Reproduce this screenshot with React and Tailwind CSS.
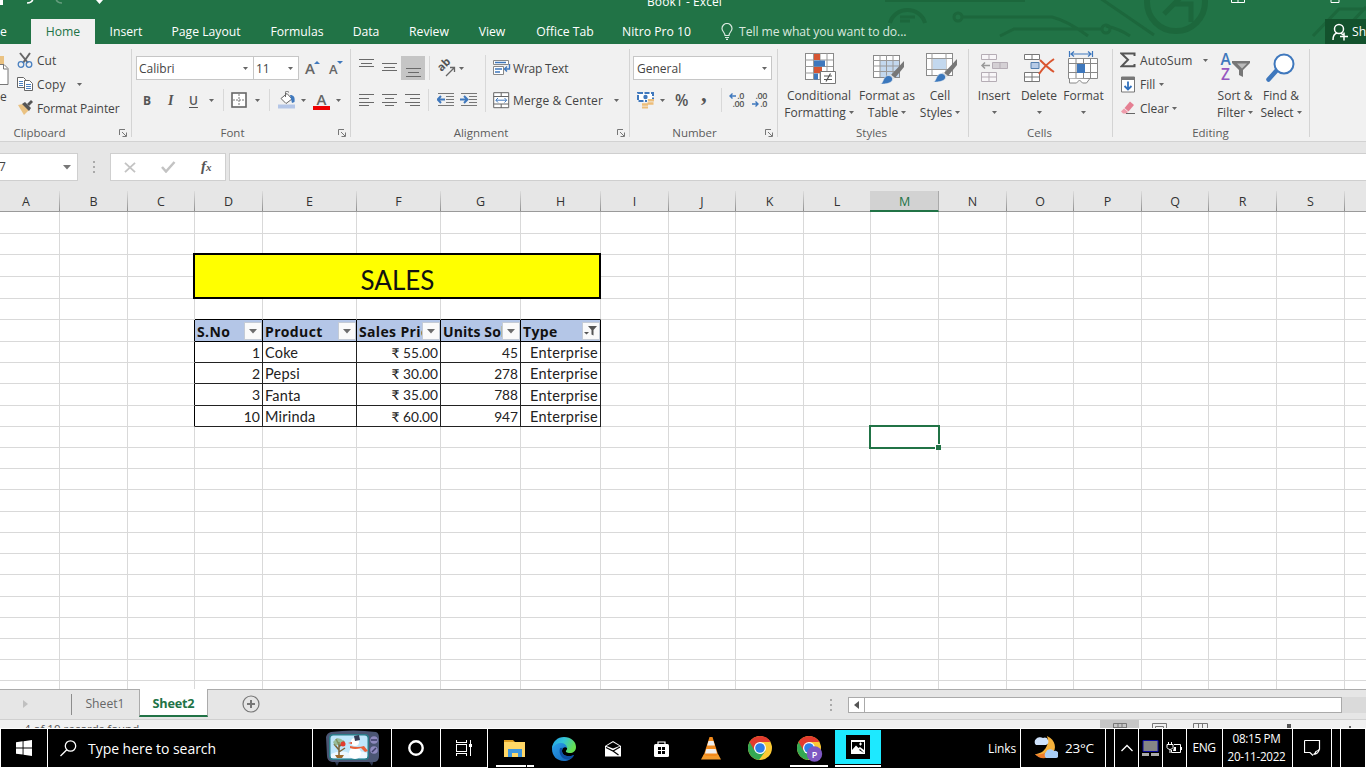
import React from "react";

const UI = "font-['Open_Sans','Noto_Sans',sans-serif]";

function Caret({ className = "" }) {
  return (
    <svg className={"shrink-0 " + className} width="5" height="3" viewBox="0 0 5 3">
      <path d="M0 0h5L2.5 3z" fill="#666" />
    </svg>
  );
}

function Sep({ className = "" }) {
  return <div className={"w-px shrink-0 bg-[#d8d8d8] " + className} />;
}

function Launcher({ className = "" }) {
  return (
    <svg className={"absolute " + className} width="9" height="9" viewBox="0 0 9 9" fill="none" stroke="#777">
      <path d="M.5 6V.5H6M3 3l4 4M7.500 3.500v4h-4" />
    </svg>
  );
}

function Group({ width, label, shift = "", launcher, children }) {
  return (
    <section className={"relative flex shrink-0 flex-col " + width}>
      <div className="h-[79px]">{children}</div>
      <div className={"flex h-[19px] items-center justify-center pt-[2px] text-[11.5px] text-[#5c5c5c] " + shift}>{label}</div>
      {launcher && <Launcher className="bottom-[3px] right-[4px]" />}
      <div className="absolute right-0 top-[5px] h-[88px] w-px bg-[#d4d4d4]" />
    </section>
  );
}

function Lines({ rows, className = "", h = 14 }) {
  return (
    <svg className={"shrink-0 " + className} width="15" height={h} viewBox={"0 0 15 " + h} stroke="#6a6a6a">
      {rows.map(([x, w, y], i) => (
        <path key={i} d={`M${x} ${y}.5h${w}`} />
      ))}
    </svg>
  );
}

function Big({ icon, l1, l2, width, caretOnly }) {
  return (
    <div className={"flex shrink-0 flex-col items-center " + width}>
      <div className="flex h-[41px] items-end">{icon}</div>
      <div className="mt-[2px] flex h-[17px] items-center whitespace-nowrap">{l1}</div>
      <div className="flex h-[17px] items-center gap-[3px] whitespace-nowrap">
        {caretOnly ? <Caret /> : <>{l2}<Caret /></>}
      </div>
    </div>
  );
}

function GridIcon({ w = 28, h = 28, children }) {
  return (
    <>
      <rect x=".5" y=".5" width={w} height={h} fill="#fff" stroke="#8a8a8a" />
      {children}
    </>
  );
}

function Brush({ x, y }) {
  return (
    <g transform={`translate(${x} ${y})`}>
      <path d="M24-2v6L15 15l-4-3z" fill="#777" />
      <path d="M10 11l5 4-2 1-5-3z" fill="#ddd" />
      <path d="M8 12.500c3 0 5 2 4.500 4.500-1 3-7 4.500-12 4 3-1 2.500-7.500 7.500-8.500z" fill="#3b78bd" stroke="#f1f1f1" strokeWidth=".6" />
    </g>
  );
}

function ClipboardGroup() {
  return (
    <Group width="w-[132px]" label="Clipboard" shift="pr-[53px]" launcher>
      <div className="flex pt-[4px]">
        <div className="w-[17px] shrink-0 overflow-hidden">
          <svg width="10" height="38" viewBox="0 0 10 38" className="block">
            <path d="M0 8h4v8H0z" fill="#eac282" />
            <path d="M-3 16.500h7l4 4V36.500H-3z" fill="#fff" stroke="#777" />
            <path d="M3.500 17v4h4" fill="none" stroke="#777" />
          </svg>
          <div className="mt-[2px] leading-[17px]">e</div>
        </div>
        <div className="flex flex-col">
          <div className="flex h-[24px] items-center">
            <svg width="17" height="17" viewBox="0 0 17 17" fill="none">
              <path d="M3 1l8 10M13 1L6 11" stroke="#666" strokeWidth="2" />
              <circle cx="4" cy="12.500" r="2.800" stroke="#4a80c0" strokeWidth="1.300" />
              <circle cx="12" cy="12.500" r="2.800" stroke="#4a80c0" strokeWidth="1.300" />
            </svg>
            <span className="ml-[3px]">Cut</span>
          </div>
          <div className="flex h-[24px] items-center">
            <svg width="17" height="16" viewBox="0 0 17 16" fill="#fff" stroke="#666">
              <path d="M.5 1.500h6l2 2v8h-8z" />
              <path d="M2 5.500h4M2 7.500h4M2 9.500h4" stroke="#4a80c0" />
              <path d="M7.500 4.500h5l3 3v7h-8z" />
              <path d="M9 8.500h5M9 10.500h5M9 12.500h5" stroke="#4a80c0" />
            </svg>
            <span className="ml-[3px] tracking-[.15px]">Copy</span>
            <Caret className="ml-[11px]" />
          </div>
          <div className="flex h-[24px] items-center">
            <svg width="17" height="16" viewBox="0 0 17 16">
              <path d="M1 5l5-1 6 6-5 5z" fill="#eac282" />
              <path d="M5 4l3-2 6 6-2 3z" fill="#555" />
              <path d="M10 4l4-4 2 2-4 4z" fill="#555" />
            </svg>
            <span className="ml-[3px] whitespace-nowrap tracking-[-.08px]">Format Painter</span>
          </div>
        </div>
      </div>
    </Group>
  );
}

function FontGroup() {
  return (
    <Group width="w-[219px]" label="Font" shift="pr-[18px]" launcher>
      <div className="flex pl-[4px] pt-[12px]">
        <div className="flex h-[24px] w-[118px] items-center justify-between border border-[#c6c6c6] bg-white pl-[2px] pr-[5px]">
          Calibri <Caret />
        </div>
        <div className="-ml-px flex h-[24px] w-[46px] items-center justify-between border border-[#c6c6c6] bg-white pl-[2px] pr-[5px]">
          11 <Caret />
        </div>
        <div className="ml-[6px] flex w-[24px] items-center">
          <span className="text-[15px] font-semibold leading-none text-[#666]">A</span>
          <svg className="mb-[12px] ml-[-1px]" width="6" height="3"><path d="M0 3h6L3 0z" fill="#3f78bd" /></svg>
        </div>
        <div className="flex items-center">
          <span className="pt-[3px] text-[13px] font-semibold leading-none text-[#666]">A</span>
          <svg className="mb-[12px] ml-[-1px]" width="6" height="3"><path d="M0 0h6L3 3z" fill="#3f78bd" /></svg>
        </div>
      </div>
      <div className="mt-[8px] flex h-[24px] items-center">
        <span className="ml-[11px] w-[24px] font-bold text-[#555]">B</span>
        <span className="w-[22px] pl-[1px] font-['Liberation_Serif',serif] text-[14px] font-bold italic text-[#555]">I</span>
        <span className="w-[20px] font-semibold text-[#555] underline underline-offset-2">U</span>
        <Caret className="mr-[9px]" />
        <Sep className="h-[22px]" />
        <svg className="ml-[7px]" width="16" height="16" viewBox="0 0 16 16" fill="none">
          <rect x="1" y="1" width="14" height="14" fill="#fff" stroke="#666" strokeWidth="1.600" />
          <path d="M8 2v12M2 8h12" stroke="#777" strokeDasharray="2 1" />
        </svg>
        <Caret className="ml-[8px] mr-[9px]" />
        <Sep className="h-[22px]" />
        <svg className="ml-[8px]" width="18" height="18" viewBox="0 0 18 18">
          <path d="M0 13.500h17v4H0z" fill="#b4c6e7" />
          <path d="M3 7.500l6-5 5 5.500-6 4.500z" fill="#fff" stroke="#666" />
          <path d="M7.500 6V1.500a1.500 1.500 0 013 0" fill="none" stroke="#666" />
          <path d="M12 4c4 0 5 2 4.500 7l-2.500 1z" fill="#3f78bd" />
        </svg>
        <Caret className="ml-[5px]" />
        <span className="ml-[7px] flex w-[17px] flex-col items-center pt-[2px]">
          <span className="text-[15px] font-semibold leading-[12px] text-[#666]">A</span>
          <span className="mt-px h-[4px] w-full bg-[#ee0000]" />
        </span>
        <Caret className="ml-[6px]" />
      </div>
    </Group>
  );
}

function Indent({ flip }) {
  return (
    <svg width="18" height="16" viewBox="0 0 18 16" fill="none" className="shrink-0">
      <path d="M1 1.500h16M9 4.500h8M9 7.500h8M9 10.500h8M1 13.500h16" stroke="#777" />
      <path d={flip ? "M0 7.500h7M4 4l3.500 3.500L4 11" : "M8 7.500H1M4 4L.7 7.500 4 11"} stroke="#3f78bd" strokeWidth="2" />
    </svg>
  );
}

function AlignmentGroup() {
  return (
    <Group width="w-[279px]" label="Alignment" shift="pr-[19px]" launcher>
      <div className="flex">
        <div className="w-[134px] pt-[12px]">
          <div className="flex h-[24px]">
            <Lines className="ml-[8px]" rows={[[0, 15, 3], [2, 11, 7], [0, 15, 10]]} />
            <Lines className="ml-[8px] mt-[4px]" rows={[[0, 15, 3], [2, 11, 7], [0, 15, 10]]} />
            <div className="ml-[4px] flex h-[24px] w-[24px] justify-center bg-[#c5c5c5] pt-[11px]">
              <Lines rows={[[0, 15, 1], [2, 11, 5], [0, 15, 9]]} />
            </div>
            <Sep className="ml-[4px] h-[24px]" />
            <svg className="ml-[7px] mt-[2px] overflow-visible" width="19" height="19" viewBox="0 0 19 19">
              <text transform="translate(4.500 14) rotate(-45)" fontSize="11" fontWeight="700" fill="#555">ab</text>
              <path d="M9 18L17 10M13 9.500h4.500V14" fill="none" stroke="#666" strokeWidth="1.300" />
            </svg>
            <Caret className="ml-[3px] mt-[11px]" />
          </div>
          <div className="mt-[8px] flex h-[24px] items-center">
            <Lines className="ml-[8px]" rows={[[0, 15, 1], [0, 10, 5], [0, 15, 9], [0, 10, 12]]} />
            <Lines className="ml-[8px]" rows={[[0, 15, 1], [3, 9, 5], [0, 15, 9], [3, 9, 12]]} />
            <Lines className="ml-[8px]" rows={[[0, 15, 1], [5, 10, 5], [0, 15, 9], [5, 10, 12]]} />
            <Sep className="ml-[8px] mr-[8px] h-[22px]" />
            <Indent />
            <span className="w-[5px]" />
            <Indent flip />
          </div>
        </div>
        <Sep className="mt-[11px] h-[57px]" />
        <div className="pl-[7px] pt-[12px]">
          <div className="flex h-[24px] items-center">
            <svg width="18" height="18" viewBox="0 0 18 18" fill="none">
              <path d="M.5 1.500h15v4H.5z" fill="#fff" stroke="#888" />
              <path d="M2 3.500h11" stroke="#3f78bd" strokeWidth="1.500" />
              <path d="M.5 7.500h10v8H.5z" fill="#fff" stroke="#888" />
              <path d="M2 10h7M2 13h5" stroke="#3f78bd" strokeWidth="1.500" />
              <path d="M16.500 5v5h-5M14 7.500L11.500 10l2.500 2.500" stroke="#3f78bd" strokeWidth="1.400" />
            </svg>
            <span className="ml-[2px] tracking-[-.2px]">Wrap Text</span>
          </div>
          <div className="mt-[8px] flex h-[24px] items-center">
            <svg width="18" height="17" viewBox="0 0 18 17" fill="none">
              <path d="M.7.700h15v15H.7zM.7 4.500h15M.7 12h15M8.200.700v4M8.200 12v4" fill="#fff" stroke="#666" />
              <path d="M3 8.200h10.500M5 6L2.800 8.200 5 10.500M11.500 6l2.200 2.200-2.200 2.300" stroke="#3f78bd" />
            </svg>
            <span className="ml-[2px] whitespace-nowrap pt-px tracking-[.12px]">Merge &amp; Center</span>
            <Caret className="ml-[11px]" />
          </div>
        </div>
      </div>
    </Group>
  );
}

function Decimal({ top, bottom, left }) {
  return (
    <div className="relative w-[23px] shrink-0 text-[9px] font-semibold leading-[8px] tracking-[-.4px] text-[#555]">
      <div className="w-[15px] text-right">{top}</div>
      <div className="w-[15px] text-right">{bottom}</div>
      <svg className={"absolute left-0 " + (left ? "top-[1px]" : "top-[9px]")} width="7" height="6" viewBox="0 0 7 6" fill="none" stroke="#3f78bd" strokeWidth="1.400">
        <path d={left ? "M7 3H1M3.500.500L1 3l2.500 2.500" : "M0 3h6M3.500.500L6 3 3.500 5.500"} />
      </svg>
    </div>
  );
}

function NumberGroup() {
  return (
    <Group width="w-[148px]" label="Number" shift="pr-[19px]" launcher>
      <div className="pl-[3px] pt-[12px]">
        <div className="flex h-[24px] w-[139px] items-center justify-between border border-[#c6c6c6] bg-white pl-[3px] pr-[4px]">
          General <Caret />
        </div>
        <div className="mt-[8px] flex h-[24px] items-center pl-[4px]">
          <svg width="18" height="18" viewBox="0 0 18 18">
            <path d="M1 2h15v8H1z" fill="#fff" stroke="#3f78bd" strokeWidth="2" strokeDasharray="5 1.500" />
            <circle cx="8.500" cy="6" r="2.200" fill="#3f78bd" />
            <path d="M10 8h7v8h-6v1H4v-5h6z" fill="#f1f1f1" />
            <path d="M11 8h6v2.500h-6zM10.500 11.300h6v2.500h-6zM5 12.300h6v2.400H5zM5 15.400h6v2H5z" fill="#edbd78" />
          </svg>
          <Caret className="ml-[5px]" />
          <span className="ml-[10px] w-[25px] text-[15.500px] font-semibold text-[#555]">%</span>
          <span className="mt-[-12px] w-[21px] pl-px font-['Liberation_Serif',serif] text-[23px] font-bold leading-[12px] text-[#555]">,</span>
          <Sep className="mr-[7px] h-[24px]" />
          <Decimal top=".0" bottom=".00" left />
          <Decimal top=".00" bottom=".0" />
        </div>
      </div>
    </Group>
  );
}

function StylesGroup() {
  return (
    <Group width="w-[191px]" label="Styles" shift="pr-[4px]">
      <div className="flex">
        <Big
          width="w-[82px]"
          l1="Conditional"
          l2="Formatting"
          icon={
            <svg className="ml-[3px]" width="32" height="32" viewBox="0 0 32 32">
              <GridIcon w={28} h={26}>
                <path d="M8.500 0v27M15 0v27M22 0v27M0 7h28M0 13.500h28M0 20h28" stroke="#999" />
                <path d="M9 1h6v6H9zM9 14h8v6H9z" fill="#d65532" />
                <path d="M9 7.500h11v6H9zM9 20.500h4v6H9z" fill="#3f78bd" />
              </GridIcon>
              <path d="M15.500 18.500h15v12h-15z" fill="#fff" stroke="#777" />
              <path d="M19 23h8M19 26.500h8M25.500 20.500l-4.500 8" stroke="#555" strokeWidth="1.200" />
            </svg>
          }
        />
        <Big
          width="w-[54px]"
          l1="Format as"
          l2="Table"
          icon={
            <svg className="ml-[4px]" width="32" height="32" viewBox="0 0 32 32">
              <g transform="translate(0 2)">
                <GridIcon w={26} h={22}>
                  <path d="M7 6h19v16H7z" fill="#c3d8ee" />
                  <path d="M7 0v22M13.500 0v22M20 0v22M0 5.500h26M0 11h26M0 16.500h26" stroke="#999" />
                </GridIcon>
              </g>
              <Brush x={7} y={10} />
            </svg>
          }
        />
        <Big
          width="w-[52px]"
          l1="Cell"
          l2="Styles"
          icon={
            <svg className="ml-[4px]" width="32" height="32" viewBox="0 0 32 32">
              <GridIcon w={26} h={22}>
                <path d="M6 0v22M20 0v22M0 5.500h26M0 16.500h26" stroke="#999" />
                <path d="M7 6h13v10H7z" fill="#c3d8ee" />
              </GridIcon>
              <Brush x={7} y={8} />
            </svg>
          }
        />
      </div>
    </Group>
  );
}

function CellsGroup() {
  return (
    <Group width="w-[144px]" label="Cells" shift="pr-[3px]">
      <div className="flex">
        <Big
          width="ml-[2px] w-[46px]"
          l1="Insert"
          caretOnly
          icon={
            <svg width="29" height="32" viewBox="0 0 29 32" fill="#f8f6f8" stroke="#b5adb5">
              <path d="M1.500 1.500h15v5h-15zM9 1.500v5M1.500 19.500h15v9h-15zM9 19.500v9M1.500 24h15" />
              <path d="M12.500 9.500h15v6h-15zM20 9.500v6" fill="#d4d0d4" />
              <path d="M10 12.500H2M5 9.500l-3 3 3 3" fill="none" stroke="#999" strokeWidth="1.500" />
            </svg>
          }
        />
        <Big
          width="w-[44px]"
          l1="Delete"
          caretOnly
          icon={
            <svg width="32" height="32" viewBox="0 0 32 32" fill="#fff" stroke="#777">
              <path d="M1.500 1.500h15v5h-15zM9 1.500v5M1.500 19.500h15v9h-15zM9 19.500v9M1.500 24h15" />
              <path d="M8 9.500h8v6H8z" fill="#b7cbe6" stroke="#557fae" />
              <path d="M17 7c4 4 8 8 14 12M31 6C25 10 20 15 16 21" fill="none" stroke="#da5630" strokeWidth="2" />
            </svg>
          }
        />
        <Big
          width="w-[45px]"
          l1="Format"
          caretOnly
          icon={
            <svg width="31" height="34" viewBox="0 0 31 34" fill="#fff" stroke="#888">
              <path d="M.5 7.500h29v20h-29zM8 7.500v20M15.500 7.500v20M22.500 7.500v20M.5 12.500h29M.5 21.500h29" />
              <path d="M9 13h8v9H9z" fill="#3f78bd" stroke="none" />
              <path d="M1.500 27.500v4.500h7l3-3 3 3h4l3-4" />
              <path d="M1.500 0v6M24.500 0v6M3 3h20M6 .500L3 3l3 2.500M20 .500L23 3l-3 2.500" fill="none" stroke="#3f78bd" strokeWidth="1.200" />
            </svg>
          }
        />
      </div>
    </Group>
  );
}

function EditingGroup() {
  return (
    <Group width="w-[197px]" label="Editing" shift="pr-[2px]">
      <div className="flex">
        <div className="w-[99px] shrink-0 pl-[7px] pt-[4px]">
          <div className="flex h-[24px] items-center">
            <svg width="16" height="16" viewBox="0 0 16 16" fill="none" stroke="#555" strokeWidth="2">
              <path d="M14.500 4V1.500H1.500L8 7.800 1.500 14.300h13V12" />
            </svg>
            <span className="ml-[4px] tracking-[.15px]">AutoSum</span>
            <Caret className="ml-[10px]" />
          </div>
          <div className="flex h-[24px] items-center">
            <svg width="16" height="17" viewBox="0 0 16 17" fill="none">
              <path d="M1.500 1h13v15h-13z" fill="#fff" stroke="#777" />
              <path d="M1 1h14v3H1z" fill="#777" />
              <path d="M8 5.500v8M4.500 10L8 13.500l3.500-3.500" stroke="#3070bd" strokeWidth="1.800" />
            </svg>
            <span className="ml-[4px]">Fill</span>
            <Caret className="ml-[4px]" />
          </div>
          <div className="flex h-[24px] items-center">
            <svg width="16" height="16" viewBox="0 0 16 16">
              <path d="M4.500 8L10 1.500l4 3.500-5.500 6.500z" fill="#e57f92" />
              <path d="M4 8.500L8 12l-1.500 1.500H3L1 11.500z" fill="#ef9cab" />
              <path d="M6 13.500h9" stroke="#666" />
            </svg>
            <span className="ml-[4px]">Clear</span>
            <Caret className="ml-[3px]" />
          </div>
        </div>
        <Big
          width="w-[46px]"
          l1="Sort &"
          l2="Filter"
          icon={
            <div className="flex h-[33px] w-[31px]">
              <div className="w-[12px] text-center text-[15.500px] font-semibold leading-[15px]">
                <div className="text-[#3f78bd]">A</div>
                <div className="text-[#9656c0]">Z</div>
              </div>
              <svg width="19" height="26" viewBox="0 0 19 26" className="shrink-0">
                <path d="M0 9h18v2l-7 7v7l-4-2v-5L0 11z" fill="#777" />
                <path d="M5 11.500h10l-5 5z" fill="#bbb" />
              </svg>
            </div>
          }
        />
        <Big
          width="w-[46px]"
          l1="Find &"
          l2="Select"
          icon={
            <svg width="30" height="32" viewBox="0 0 30 32">
              <path d="M11 17L2.500 26.500" stroke="#3f78bd" strokeWidth="4.500" strokeLinecap="round" />
              <circle cx="18" cy="11" r="9.500" fill="#fff" stroke="#3f78bd" strokeWidth="2" />
            </svg>
          }
        />
      </div>
    </Group>
  );
}

const TABS = [
  ["Insert", "w-[62px]"],
  ["Page Layout", "w-[98px]"],
  ["Formulas", "w-[84px]"],
  ["Data", "w-[54px]"],
  ["Review", "w-[72px]"],
  ["View", "w-[54px]"],
  ["Office Tab", "w-[92px]"],
  ["Nitro Pro 10", "w-[91px]"],
];

function Header() {
  return (
    <header className="relative h-[44px] shrink-0 overflow-hidden bg-[#217346] text-white">
      <svg className="absolute left-[880px] top-0" width="486" height="44" viewBox="0 0 486 44" fill="none" stroke="#1c673c" strokeWidth="4">
        <path d="M5 0h140M10 23a18 17 0 0135 0" />
        <path d="M20 17h15M20 21h10" strokeWidth="3" />
        <circle cx="78" cy="17" r="4" strokeWidth="3" />
        <path d="M82 17h90q16 4 36 19M120 36l14-7h88M226 26q14 3 24 10M180-2h40l54 37" strokeWidth="3" />
        <circle cx="226" cy="29" r="4" strokeWidth="3" />
        <circle cx="296" cy="2" r="29" strokeWidth="6" />
        <path d="M284 14l26-26M293 4h18v18" strokeWidth="5" />
        <path d="M433 36l26-27h27M470 24l16-17" strokeWidth="3" />
      </svg>
      <div className="relative flex h-[19px]">
        <svg width="110" height="6" viewBox="0 0 110 6" fill="none">
          <path d="M0 0h3v5H0z" fill="#fff" />
          <path d="M27 3q5 0 6-4" stroke="#fff" strokeWidth="1.500" />
          <path d="M62 3q-5 0-6-4" stroke="#649c7c" strokeWidth="1.500" />
          <path d="M96 0h7l-3.500 4z" fill="#fff" />
        </svg>
        <div className="ml-[537px] mt-[-7px] w-[584px] text-[12px] leading-[17px] tracking-[.08px]">Book1 - Excel</div>
        <svg width="14" height="5" viewBox="0 0 14 5" fill="none" stroke="#fff" className="mt-[-1px]">
          <path d="M.5 0V3.500H13.500V0M7 0v3.500" />
        </svg>
        <svg width="12" height="5" viewBox="0 0 12 5" fill="none" stroke="#fff" className="ml-[85px]">
          <path d="M1 0v2.500h8V0" />
        </svg>
      </div>
      <nav className="relative flex h-[25px] items-stretch text-[12.200px]">
        <div className="flex w-[31px] shrink-0 items-center pt-[2px]">e</div>
        <div className="flex w-[64px] shrink-0 items-center justify-center bg-[#f1f1f1] pt-[2px] text-[#217346]">Home</div>
        {TABS.map(([name, w]) => (
          <div key={name} className={"flex shrink-0 items-center justify-center whitespace-nowrap pt-[2px] " + w}>{name}</div>
        ))}
        <div className="ml-[19px] flex w-[604px] shrink-0 items-center text-[#d9e8df]">
          <svg width="12" height="17" viewBox="0 0 12 17" fill="none" stroke="#d9e8df" strokeWidth="1.200">
            <path d="M4 12.500c0-3-3-4-3-7a5 5 0 0110 0c0 3-3 4-3 7zM4 14.500h4M5 16.300h2" />
          </svg>
          <span className="ml-[6px] pt-[2px] tracking-[-.08px]">Tell me what you want to do...</span>
        </div>
        <div className="flex flex-1 items-center bg-[#13522d] pl-[7px]">
          <svg className="shrink-0" width="16" height="18" viewBox="0 0 16 18" fill="none" stroke="#fff" strokeWidth="1.500">
            <circle cx="7" cy="6" r="4.500" />
            <path d="M1 17q0-6 4-7M9 10l2 2M8 13.500h8M12 9.500v8" />
          </svg>
          <span className="ml-[4px] whitespace-nowrap pt-[2px]">Share</span>
        </div>
      </nav>
    </header>
  );
}

function FormulaBar() {
  return (
    <div className="flex h-[49px] shrink-0 items-start border-t border-[#d2d2d2] bg-[#e6e6e6] pt-[11px] text-[12px] text-[#444]">
      <div className="flex h-[28px] w-[78px] items-center justify-between border border-l-0 border-[#cfcfcf] bg-white pr-[6px]">
        <span className="-ml-px">7</span>
        <svg width="8" height="5"><path d="M0 0h8L4 4.500z" fill="#777" /></svg>
      </div>
      <svg className="ml-[14px] mt-[8px]" width="4" height="12" fill="#aaa"><path d="M1 0h2v2H1zM1 5h2v2H1zM1 10h2v2H1z" /></svg>
      <div className="ml-[14px] flex h-[28px] w-[116px] items-center border border-[#cfcfcf] bg-white">
        <svg className="ml-[13px]" width="12" height="11" viewBox="0 0 13 12" stroke="#c3c3c3" strokeWidth="2"><path d="M1 1l11 10M12 1L1 11" /></svg>
        <svg className="ml-[25px]" width="15" height="12" viewBox="0 0 15 12" fill="none" stroke="#c3c3c3" strokeWidth="2.500"><path d="M1 6l4 4.500L13.500 1" /></svg>
        <span className="ml-[25px] pb-px font-['Liberation_Serif',serif] text-[15px] font-bold italic leading-none text-[#555]">
          f<span className="text-[11px]">x</span>
        </span>
      </div>
      <div className="ml-[3px] h-[28px] flex-1 border border-r-0 border-[#cfcfcf] bg-white" />
    </div>
  );
}

const COLS = "grid-cols-[60px_68px_67px_68px_94px_84px_80px_80px_68px_67px_68px_67px_68px_68px_67px_68px_67px_68px_68px_22px]";
const ROWS = "grid-rows-[22px_21px_22px_22px_21px_22px_21px_21px_22px_21px_21px_21px_21px_22px_21px_21px_21px_22px_21px_21px_21px_21px_21px]";
const LETTERS = "ABCDEFGHIJKLMNOPQRS".split("").concat("");

const HEAD = ["S.No", "Product", "Sales Price", "Units Sold", "Type"];
const DATA = [
  ["1", "Coke", "₹ 55.00", "45", "Enterprise"],
  ["2", "Pepsi", "₹ 30.00", "278", "Enterprise"],
  ["3", "Fanta", "₹ 35.00", "788", "Enterprise"],
  ["10", "Mirinda", "₹ 60.00", "947", "Enterprise"],
];
const DATA_STYLE = [
  "justify-end pt-[1px] text-[14px]",
  "justify-start pt-[3px] text-[14.5px] tracking-[.2px]",
  "justify-end pt-[1px] text-[13.7px]",
  "justify-end pt-[1px] text-[13.7px]",
  "justify-end pt-[3px] text-[14.5px] tracking-[.28px]",
];

function FilterButton({ active }) {
  return (
    <span className="absolute bottom-px right-0 flex h-[18px] w-[18px] items-center justify-center border border-[#c4cbd6] bg-[#fafafa]">
      {active ? (
        <svg width="14" height="12" viewBox="0 0 14 12" fill="#555">
          <path d="M4 1h9L9.500 5v5.500l-2-1V5zM0 7h5L2.500 9.500z" />
        </svg>
      ) : (
        <svg width="8" height="5"><path d="M0 0h8L4 4.500z" fill="#6d6d6d" /></svg>
      )}
    </span>
  );
}

function Sheet() {
  const cells = [];
  for (let r = 0; r < 23; r++) {
    for (let c = 0; c < 20; c++) {
      const key = r + "-" + c;
      const inTitle = (r === 2 || r === 3) && c >= 3 && c <= 7;
      if (inTitle) {
        if (r === 2 && c === 3) {
          cells.push(
            <div key={key} className="relative z-10 col-span-5 row-span-2 -ml-[2px] -mt-[2px] flex items-center justify-center border-2 border-black bg-[#ffff00] pl-px pt-[7px] font-['Lato',sans-serif] text-[26px] leading-none text-[#111]">
              SALES
            </div>
          );
        }
        continue;
      }
      const i = c - 3;
      if (r === 5 && i >= 0 && i < 5) {
        cells.push(
          <div key={key} className="relative flex items-center overflow-hidden whitespace-nowrap border-b border-r border-black bg-[#b4c6e7] pl-[2px] pt-px text-[14px] font-bold tracking-[.35px] text-[#111]">
            <span className={i === 3 ? "w-[60px] overflow-hidden tracking-[.1px]" : i === 2 ? "w-[64px] overflow-hidden" : ""}>{HEAD[i]}</span>
            <FilterButton active={i === 4} />
          </div>
        );
        continue;
      }
      if (r >= 6 && r <= 9 && i >= 0 && i < 5) {
        cells.push(
          <div key={key} className={"flex items-center whitespace-nowrap border-b border-r border-[#222] px-[2px] font-['Lato','Noto_Sans',sans-serif] leading-none text-[#222] " + DATA_STYLE[i]}>
            {DATA[r - 6][i]}
          </div>
        );
        continue;
      }
      const darkRight = c === 2 && r >= 5 && r <= 9;
      const darkBottom = r === 4 && i >= 0 && i < 5;
      cells.push(
        <div key={key} className={"relative border-b border-r " + (darkRight ? "border-r-black " : "border-r-[#d9d9d9] ") + (darkBottom ? "border-b-black" : "border-b-[#d9d9d9]")}>
          {r === 10 && c === 12 && (
            <div className="absolute -left-[2px] -top-[2px] z-10 h-[24px] w-[71px] border-2 border-[#217346]">
              <div className="absolute -bottom-[3px] -right-[3px] h-[6px] w-[6px] border-l border-t border-white bg-[#217346]" />
            </div>
          )}
        </div>
      );
    }
  }
  return (
    <main className="flex h-[499px] shrink-0 flex-col overflow-hidden bg-white">
      <div className={"grid h-[22px] shrink-0 border-b border-[#9a9a9a] bg-[#e6e6e6] pt-px text-[12.500px] leading-none text-[#333] " + COLS}>
        {LETTERS.map((l, i) =>
          l === "M" ? (
            <div key={i} className="-mb-px -ml-px flex items-center justify-center border-b-2 border-r border-b-[#217346] border-r-[#aaa] bg-[#d2d2d2] pl-px pt-[3px] text-[#217346]">{l}</div>
          ) : (
            <div key={i} className={"flex items-center justify-center bg-[linear-gradient(to_bottom,#dddddd,#8f8f8f)] bg-[length:1px_100%] bg-right bg-no-repeat pt-[2px] " + (i === 0 ? "pr-[8px]" : "pr-px")}>{l}</div>
          )
        )}
      </div>
      <div className={"grid " + COLS + " " + ROWS}>{cells}</div>
    </main>
  );
}

function SheetTabs() {
  return (
    <div className="flex h-[30px] shrink-0 border-t border-[#ababab] bg-[#e6e6e6] text-[12.200px]">
      <svg className="ml-[23px] mt-[10px]" width="5" height="8"><path d="M0 0v8l5-4z" fill="#c0c0c0" /></svg>
      <div className="ml-[43px] mt-[4px] h-[21px] w-px bg-[#8d8d8d]" />
      <div className="flex h-[28px] w-[67px] items-center justify-center pr-px text-[#666]">Sheet1</div>
      <div className="-mt-px flex h-[28px] w-[69px] items-center justify-center border-b-2 border-l border-r border-b-[#217346] border-l-[#ababab] border-r-[#ababab] bg-white pt-[4px] text-[12.700px] font-bold tracking-[-.2px] text-[#217346]">Sheet2</div>
      <svg className="ml-[34px] mt-[5px]" width="18" height="18" viewBox="0 0 18 18" fill="none" stroke="#777">
        <circle cx="9" cy="9" r="8" strokeWidth="1.200" />
        <path d="M9 5v8M5 9h8" strokeWidth="2" />
      </svg>
      <svg className="ml-[570px] mt-[9px]" width="3" height="12" fill="#aaa"><path d="M0 0h2v2H0zM0 5h2v2H0zM0 10h2v2H0z" /></svg>
      <div className="ml-[15px] mt-[7px] flex h-[16px] w-[17px] items-center justify-center border border-[#aaa] bg-white">
        <svg width="5" height="8"><path d="M5 0v8L0 4z" fill="#555" /></svg>
      </div>
      <div className="-ml-px mt-[7px] h-[16px] w-[478px] border border-[#aaa] bg-white" />
      <div className="mt-[7px] h-[16px] flex-1 bg-[#dadada]" />
    </div>
  );
}

function StatusBar() {
  return (
    <div className="flex h-[9px] shrink-0 overflow-hidden border-t border-[#d0d0d0] bg-[#f1f1f1] text-[11.500px] text-[#555]">
      <div className="ml-[24px] mt-px w-[1076px] leading-[16px]">4 of 10 records found</div>
      <div className="flex w-[39px] justify-center bg-[#c6c6c6] pt-[3px]">
        <svg width="14" height="6" fill="none" stroke="#777"><path d="M.5 6V.500h13V6M5 0v6M9 0v6M0 4.500h14" /></svg>
      </div>
      <svg className="ml-[13px] mt-[3px]" width="15" height="6" fill="none" stroke="#777"><path d="M.5 6V.500h14V6M3.500 6V3.500h8V6" /></svg>
      <svg className="ml-[26px] mt-[3px]" width="15" height="6" fill="none" stroke="#777"><path d="M.5 6V.500h14V6M5.500 0v5M9.500 0v5" /></svg>
      <div className="ml-[79px] mt-[4px] h-[5px] w-[4px] bg-[#555]" />
      <div className="ml-[58px] mt-[6px] h-[3px] w-[2px] bg-[#666]" />
    </div>
  );
}

function Slot({ width, plain, children }) {
  return (
    <div className={"flex shrink-0 items-center justify-center " + width + (plain ? "" : " border-b border-r border-white")}>
      {children}
    </div>
  );
}

function Chrome({ badge }) {
  return (
    <svg width="26" height="28" viewBox="0 0 26 28">
      <circle cx="12" cy="13" r="12" fill="#fcc934" />
      <path d="M12 13L1.600 7A12 12 0 0011 25l6.500-9z" fill="#34a853" />
      <path d="M1.600 7A12 12 0 0122.400 7H12L6.500 15.500z" fill="#e33b2e" />
      <circle cx="12" cy="13" r="6" fill="#fff" />
      <circle cx="12" cy="13" r="4.800" fill="#2f7de9" />
      {badge && (
        <>
          <circle cx="17.500" cy="19" r="7.700" fill="#7e57c2" />
          <text x="14.800" y="22.500" fontSize="9" fontWeight="600" fill="#fff">P</text>
        </>
      )}
    </svg>
  );
}

function Taskbar() {
  return (
    <footer className="flex h-[40px] shrink-0 border-t border-white bg-black text-white">
      <div className="w-px bg-white" />
      <Slot width="w-[47px]">
        <svg width="16" height="16" viewBox="0 0 16 16" fill="#fff">
          <path d="M0 2.200L6.600 1.300v6.200H0zM7.500 1.200L16 0v7.500H7.500zM0 8.400h6.600v6.200L0 13.700zM7.500 8.400H16V16l-8.500-1.200z" />
        </svg>
      </Slot>
      <div className="flex w-[265px] items-center border-b border-r border-white pl-[12px] text-[14px]">
        <svg width="17" height="17" viewBox="0 0 17 17" fill="none" stroke="#fff" strokeWidth="1.300">
          <circle cx="10.500" cy="6" r="5.200" />
          <path d="M6.800 9.700L.5 16" />
        </svg>
        <span className="ml-[11px] tracking-[-.04px]">Type here to search</span>
      </div>
      <Slot width="w-[79px]">
        <svg className="ml-[2px]" width="54" height="36" viewBox="0 0 54 36">
          <path d="M8 30h6l-3 6zM42 30h6l-2 6z" fill="#2f3852" />
          <path d="M5 2Q27-1 50 2q3 1 3 6v18q0 5-4 6H6q-5-1-5-6L0 7q1-4 5-5z" fill="#4b5674" />
          <rect x="3" y="4" width="40" height="26" rx="4" fill="#2b7f8c" />
          <rect x="4.500" y="5.500" width="37" height="23" rx="3" fill="#bfe6fb" />
          <path d="M5 24q10-5 18-1 8-4 18 0v5H5z" fill="#eef8ff" />
          <path d="M13 26V12M13 20l-5-6M13 17l5-6M13 15l-3-6M13 22l6-4" stroke="#7b6338" strokeWidth="1.500" />
          <path d="M7 12l4-4 4 1 4 3-1 4-4-2-5 2z" fill="#86aa72" opacity=".7" />
          <circle cx="17" cy="14" r="2.500" fill="#e23b2e" />
          <path d="M9 25h9l-2 3h-5z" fill="#9c6a2d" />
          <circle cx="29" cy="23" r="6" fill="#fff" />
          <circle cx="29" cy="12" r="4" fill="#fff" />
          <path d="M28 6l5-1 1 5-5 1z" fill="#333a55" />
          <path d="M24 16q8 2 14 0l4 5-3 1-4-4q-6 2-11 0z" fill="#e8613a" />
          <path d="M26 12l-4 1 4 1z" fill="#e34b2b" />
          <circle cx="48" cy="10" r="3.800" fill="#8e8abf" />
          <circle cx="48" cy="20" r="3.800" fill="#8e8abf" />
          <path d="M45 10h6M46 22l4-4" stroke="#3d3f68" strokeWidth="1.500" />
        </svg>
      </Slot>
      <Slot width="w-[49px]">
        <svg width="16" height="16" fill="none" stroke="#fff" strokeWidth="2.400"><circle cx="8" cy="8" r="6.700" /></svg>
      </Slot>
      <Slot width="w-[47px]">
        <svg width="17" height="16" viewBox="0 0 17 16" fill="none" stroke="#fff" shapeRendering="crispEdges">
          <path d="M.5 0v2.500h10V0M.5 4.500h10v7H.5zM.5 16v-2.500h10V16M14.500 0v16" />
          <path d="M13 4h3v3h-3z" fill="#fff" stroke="none" />
        </svg>
      </Slot>
      <div className="relative flex w-[54px] shrink-0 items-center justify-center">
        <svg width="22" height="20" viewBox="0 0 22 20">
          <path d="M0 1h9l2 2H0z" fill="#dfa023" />
          <path d="M0 3h21v15H0z" fill="#ffd766" />
          <path d="M4 18V10h14v8h-4v-4H8v4z" fill="#3f97dd" />
        </svg>
        <div className="absolute bottom-px left-[8px] flex gap-px"><div className="h-[2px] w-[30px] bg-white" /><div className="h-[2px] w-[7px] bg-white" /></div>
      </div>
      <Slot plain width="w-[44px]">
        <svg width="24" height="24" viewBox="0 0 24 24">
          <defs>
            <linearGradient id="edgeTop" x1="0" y1="0" x2="1" y2=".4"><stop offset="0" stopColor="#1f9de8" /><stop offset=".5" stopColor="#35c5d8" /><stop offset="1" stopColor="#66e04f" /></linearGradient>
            <linearGradient id="edgeLow" x1="0" y1="0" x2="1" y2="1"><stop offset="0" stopColor="#2ba3ec" /><stop offset="1" stopColor="#1160b7" /></linearGradient>
          </defs>
          <path d="M0 12c0-5 4-8 9-8 5 0 7 4 6 7-2-2-5 0-5 3 0 4 5 7 12 4-2 4-6 6-10 6C5 24 0 19 0 12z" fill="url(#edgeLow)" />
          <path d="M8 11c-2 7 3 12 9 11.500 2-.7 4-2.500 5-4.500-7 3-12 0-12-4 0-1.500.6-2.500 1.500-3.200z" fill="#0e4fa3" />
          <path d="M0 11.500C.5 4.500 5.500 0 12 0c7 0 12 4.500 12 10 0 4-3 6-6 6-3.500 0-4.500-1.200-4-2.200 1-1 1.300-2 1-3.300C14.500 7.500 12 6 9 6c-4 0-7 2-9 5.500z" fill="url(#edgeTop)" />
        </svg>
      </Slot>
      <Slot plain width="w-[56px]">
        <svg className="mr-[2px]" width="16" height="16" viewBox="0 0 16 16" fill="none">
          <path d="M0 5l8-5 8 5v10.500H0z" fill="#fff" />
          <path d="M1.500 5L8 1.200 14.500 5 8 7.500z" fill="#000" />
          <path d="M1 6.500L8 10l7-4M8 10l5.500 4" stroke="#000" strokeWidth="1.200" />
        </svg>
      </Slot>
      <Slot plain width="w-[40px]">
        <svg className="mr-[1px]" width="15" height="16" viewBox="0 0 15 16">
          <path d="M4 4V1h7v3" fill="none" stroke="#fff" strokeWidth="1.200" />
          <rect y="3" width="15" height="13" rx="1.500" fill="#fff" />
          <path d="M4 6h3v3H4zM8 6h3v3H8zM4 10h3v3H4zM8 10h3v3H8z" fill="#000" />
        </svg>
      </Slot>
      <Slot plain width="w-[58px]">
        <svg width="20" height="23" viewBox="0 0 20 23">
          <path d="M8.500 0h3l6 19h-15z" fill="#f28a1c" />
          <path d="M7.500 4h5l1.300 4.500H6.200zM5.300 12h9.400l1.300 4.500H4z" fill="#eee" />
          <path d="M3 17L0 22.500h20L17 17l-2 2H5z" fill="#f39a2b" />
        </svg>
      </Slot>
      <Slot plain width="w-[41px]"><Chrome /></Slot>
      <div className="relative flex w-[54px] shrink-0 items-center justify-center pl-[4px]">
        <Chrome badge />
        <div className="absolute bottom-px left-[9px] h-[2px] w-[38px] bg-white" />
      </div>
      <div className="flex w-[46px] shrink-0 flex-col justify-between pt-px">
        <div className="flex h-[34px] items-center justify-center bg-[#1de9ff]">
          <div className="flex h-[24px] w-[24px] items-center justify-center bg-black">
            <svg width="14" height="14" viewBox="0 0 14 14">
              <path d="M0 0h14v14H0z" fill="#fff" />
              <path d="M1 2h12v8L9 7 7.500 8 5 5.500 1 10zM8 10l1-1 4 4" fill="#000" />
              <path d="M9.500 2.500v3M8 4h3" stroke="#fff" />
            </svg>
          </div>
        </div>
        <div className="mb-px h-[2px] bg-white" />
      </div>
      <div className="flex flex-1 items-center justify-end border-r border-white pr-[4px] text-[12px] tracking-[-.15px]">Links</div>
      <div className="flex w-[85px] shrink-0 items-center border-b border-r border-white pl-[12px] text-[13.500px] tracking-[-.2px]">
        <svg width="25" height="24" viewBox="0 0 25 24">
          <path d="M14 0c9 4 10 13 5 18-5 5-12 5-17 0 9 0 15-9 12-18z" fill="#f5b13b" />
          <path d="M2 18c4 5 11 6 16 1l-4-3c-4 2-8 3-12 2z" fill="#ed7c2b" />
          <path d="M3 9a4 4 0 010-6 5 4 0 017-1 3.500 3.500 0 013 7z" fill="#cfe2fb" />
          <path d="M13 22a4 4 0 010-6 4.500 4 0 018-1 3.500 3.500 0 012 7z" fill="#a9cdf6" />
        </svg>
        <span className="ml-[7px]">23°C</span>
      </div>
      <Slot width="w-[9px]" />
      <Slot width="w-[24px]">
        <svg width="12" height="8" fill="none" stroke="#fff" strokeWidth="1.300"><path d="M.5 7L6 1.500 11.500 7" /></svg>
      </Slot>
      <Slot width="w-[24px]">
        <svg width="17" height="16" viewBox="0 0 17 16">
          <path d="M1 .500h15v11H1z" fill="#858585" stroke="#0b0ba0" />
          <path d="M0 13h7v3H0zM9 13h8v3H9z" fill="#aaa" />
        </svg>
      </Slot>
      <Slot width="w-[24px]">
        <svg width="17" height="12" viewBox="0 0 17 12" fill="none" stroke="#fff">
          <path d="M8 2.500h6.500v8H5.500V8M15.500 5v3M1 2.500h6v3q-1 2-3 2t-3-2zM2.500 0v3M5.500 0v3M4 8v3" />
          <path d="M8 5h2v4H7z" fill="#fff" stroke="none" />
        </svg>
      </Slot>
      <div className="flex w-[36px] shrink-0 items-center justify-center border-b border-r border-white pr-px text-[12px] tracking-[-.4px]">ENG</div>
      <div className="flex w-[70px] shrink-0 flex-col items-center justify-center whitespace-nowrap border-b border-r border-white pr-[2px] text-[11.700px] leading-[18px] tracking-[-.3px]">
        <span className="-mt-[2px]">08:15 PM</span><span>20-11-2022</span>
      </div>
      <Slot width="w-[39px]">
        <svg width="17" height="17" viewBox="0 0 17 17" fill="none" stroke="#fff">
          <path d="M.5 .5h15v9M.5 .5v12H6l3 3M15.500 9q-1 5-6 5.500 2-1 2.500-3 2-.5 3.500-2.500z" strokeWidth="1.200" />
        </svg>
      </Slot>
      <Slot width="w-[9px]" />
      <Slot width="w-[25px]" />
    </footer>
  );
}

export default function App() {
  return (
    <div className={"flex h-[768px] w-[1366px] flex-col overflow-hidden bg-[#e6e6e6] " + UI}>
      <Header />
      <div className="flex h-[97px] shrink-0 bg-[#f1f1f1] text-[12px] leading-[17px] text-[#444]">
        <ClipboardGroup />
        <FontGroup />
        <AlignmentGroup />
        <NumberGroup />
        <StylesGroup />
        <CellsGroup />
        <EditingGroup />
      </div>
      <FormulaBar />
      <Sheet />
      <SheetTabs />
      <StatusBar />
      <Taskbar />
    </div>
  );
}
